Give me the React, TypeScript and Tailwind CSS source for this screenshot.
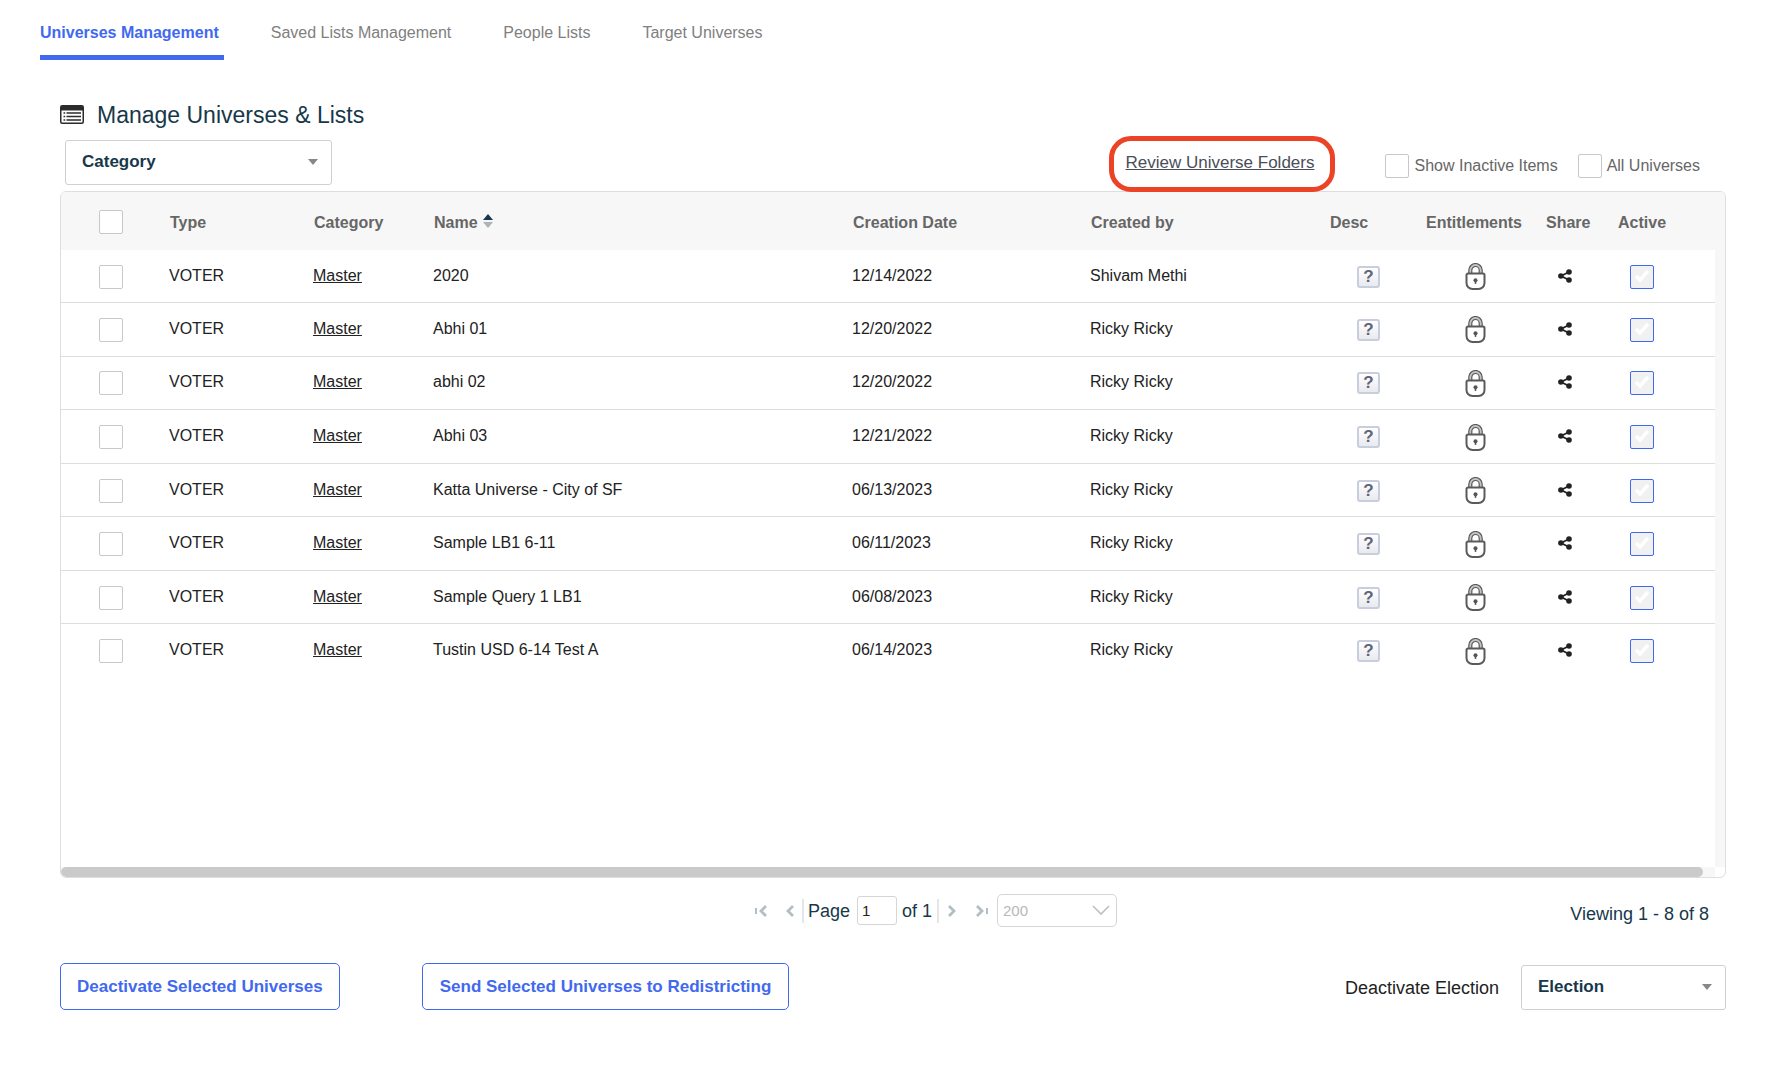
import { useState } from "react";

const tabs = ["Universes Management", "Saved Lists Management", "People Lists", "Target Universes"];

const universes = [
    { name: "2020", date: "12/14/2022", createdBy: "Shivam Methi" },
    { name: "Abhi 01", date: "12/20/2022", createdBy: "Ricky Ricky" },
    { name: "abhi 02", date: "12/20/2022", createdBy: "Ricky Ricky" },
    { name: "Abhi 03", date: "12/21/2022", createdBy: "Ricky Ricky" },
    { name: "Katta Universe - City of SF", date: "06/13/2023", createdBy: "Ricky Ricky" },
    { name: "Sample LB1 6-11", date: "06/11/2023", createdBy: "Ricky Ricky" },
    { name: "Sample Query 1 LB1", date: "06/08/2023", createdBy: "Ricky Ricky" },
    { name: "Tustin USD 6-14 Test A", date: "06/14/2023", createdBy: "Ricky Ricky" },
];

function ListIcon() {
    return (
        <svg width="24" height="19" viewBox="0 0 24 19" className="mb-[2px]" aria-hidden="true">
            <rect x="0.75" y="0.75" width="22.5" height="17.5" rx="1.5" fill="#fff" stroke="#2b2b2b" strokeWidth="1.5" />
            <path d="M1 1h22v4.5H1z" fill="#2b2b2b" />
            <path d="M3.5 8h1.7M3.5 11.5h1.7M3.5 15h1.7M6.5 8H21M6.5 11.5H21M6.5 15H21" stroke="#2b2b2b" strokeWidth="1.5" />
        </svg>
    );
}

function LockIcon() {
    return (
        <svg width="21" height="27" viewBox="0 0 21 27" className="block" aria-hidden="true">
            <path d="M5.3 11.5V7.2a5.2 5.2 0 0 1 10.4 0v4.3" fill="#fff" stroke="#5a5a5a" strokeWidth="4.2" />
            <path d="M5.3 11.5V7.2a5.2 5.2 0 0 1 10.4 0v4.3" fill="none" stroke="#c4c4c4" strokeWidth="1.8" />
            <path
                d="M3 10.5h15a1.5 1.5 0 0 1 1.5 1.5v8a6 6 0 0 1-6 6h-6a6 6 0 0 1-6-6v-8A1.5 1.5 0 0 1 3 10.5z"
                fill="#fff"
                stroke="#5a5a5a"
                strokeWidth="2"
            />
            <circle cx="10.5" cy="17.2" r="2" fill="#555" />
            <path d="M9.7 17.5h1.6v3.4H9.7z" fill="#555" />
        </svg>
    );
}

function ShareIcon() {
    return (
        <svg width="14" height="14" viewBox="0 0 14 14" className="block" aria-hidden="true">
            <path d="M11 3L3 7l8 4" fill="none" stroke="#222" strokeWidth="1.8" />
            <circle cx="11" cy="3" r="2.8" fill="#222" />
            <circle cx="2.9" cy="7" r="2.8" fill="#222" />
            <circle cx="11" cy="11" r="2.8" fill="#222" />
        </svg>
    );
}

function Tick() {
    return (
        <svg width="16" height="14" viewBox="0 0 16 14" className="pointer-events-none absolute top-1 left-1" aria-hidden="true">
            <path d="M2 7l4 4 8-9" fill="none" stroke="#fff" strokeWidth="3.4" />
        </svg>
    );
}

function Checkbox({ id, label }: { id?: string; label?: string }) {
    return (
        <input
            id={id}
            type="checkbox"
            aria-label={label}
            className="block size-6 shrink-0 appearance-none rounded-[2px] border border-[#c8c8c8] bg-white"
        />
    );
}

function Dropdown({ id, label, option, className }: { id: string; label?: string; option: string; className: string }) {
    return (
        <div className={"relative " + className}>
            <select
                id={id}
                aria-label={label}
                className="block h-[45px] w-full appearance-none rounded-[3px] border border-[#cdd1d5] bg-white px-4 pb-px text-[17px] font-bold text-[#17384a]"
            >
                <option>{option}</option>
            </select>
            <svg width="10" height="6" viewBox="0 0 10 6" className="pointer-events-none absolute top-[19px] right-[14px]" aria-hidden="true">
                <path d="M0 0h10L5 6z" fill="#888" />
            </svg>
        </div>
    );
}

function PagerButton({ label, path, bar }: { label: string; path: string; bar?: string }) {
    return (
        <button type="button" aria-label={label} className="flex h-6 w-[14px] items-center justify-center">
            <svg width="14" height="12" viewBox="0 0 14 12" aria-hidden="true">
                <path d={path} fill="none" stroke="#b3bec4" strokeWidth="2.8" />
                {bar && <path d={bar} stroke="#b3bec4" strokeWidth="2" />}
            </svg>
        </button>
    );
}

export default function App() {
    const [activeTab, setActiveTab] = useState(tabs[0]);

    return (
        <div className="bg-white pb-16 font-['Liberation_Sans',Arial,sans-serif] text-base text-[#222]">
            <nav className="flex gap-[47px] px-10 pt-[21px]">
                {tabs.map((tab) => (
                    <button
                        key={tab}
                        type="button"
                        onClick={() => setActiveTab(tab)}
                        className={
                            tab === activeTab
                                ? "border-b-[5px] border-[#4169f0] pr-[5px] pb-[10px] font-bold text-[#4169f0]"
                                : "border-b-[5px] border-transparent pr-[5px] pb-[10px] text-[#808080]"
                        }
                    >
                        {tab}
                    </button>
                ))}
            </nav>

            <main className="pt-[41px] pr-[50px] pl-[60px]">
                <h1 className="flex items-center gap-[13px] text-[23px] leading-7 text-[#17384a]">
                    <ListIcon />
                    Manage Universes &amp; Lists
                </h1>

                <div className="flex items-start justify-between pt-[7px] pr-[26px] pl-[5px]">
                    <Dropdown id="category" label="Category" option="Category" className="mt-1 w-[267px]" />
                    <div className="flex items-start">
                        <div className="relative z-10 flex h-14 items-center rounded-[22px] border-[5px] border-[#ec4327] pr-4 pb-[2px] pl-3">
                            <a href="#folders" className="text-[17px] leading-6 text-[#4a4e5a] underline">
                                Review Universe Folders
                            </a>
                        </div>
                        <div className="flex gap-5 pt-[18px] pl-[50px] text-[#666]">
                            <div className="flex items-center gap-[5px]">
                                <Checkbox id="inactive" />
                                <label htmlFor="inactive">Show Inactive Items</label>
                            </div>
                            <div className="flex items-center gap-[5px]">
                                <Checkbox id="all" />
                                <label htmlFor="all">All Universes</label>
                            </div>
                        </div>
                    </div>
                </div>

                <div className="-mt-px overflow-hidden rounded-md border border-[#dedede]">
                    <div className="min-h-[675px] bg-linear-to-l from-[#f7f7f7] from-[10px] to-white to-[10px]">
                        <table className="h-[486px] w-full table-fixed text-left">
                            <colgroup>
                                <col className="w-[108px]" />
                                <col className="w-36" />
                                <col className="w-[120px]" />
                                <col />
                                <col className="w-[238px]" />
                                <col className="w-[239px]" />
                                <col className="w-24" />
                                <col className="w-[120px]" />
                                <col className="w-[72px]" />
                                <col className="w-[98px]" />
                                <col className="w-[10px]" />
                            </colgroup>
                            <thead className="bg-[#f7f7f7] text-[#666]">
                                <tr className="h-[58px] *:pt-1 *:pl-px">
                                    <th className="pt-[2px]! pl-[38px]!">
                                        <Checkbox label="Select all" />
                                    </th>
                                    <th>Type</th>
                                    <th>Category</th>
                                    <th>
                                        <button type="button" className="flex items-center gap-[5px] font-bold">
                                            Name
                                            <svg width="10" height="14" viewBox="0 0 10 14" className="mb-1" aria-hidden="true">
                                                <path d="M0 6l5-6 5 6z" fill="#17384a" />
                                                <path d="M0 8h10l-5 6z" fill="#a9b4ba" />
                                            </svg>
                                        </button>
                                    </th>
                                    <th>Creation Date</th>
                                    <th>Created by</th>
                                    <th>Desc</th>
                                    <th>Entitlements</th>
                                    <th>Share</th>
                                    <th>Active</th>
                                    <th></th>
                                </tr>
                            </thead>
                            <tbody>
                                {universes.map((universe) => (
                                    <tr key={universe.name} className="*:border-b *:border-[#dedede] *:pb-px last:*:border-transparent">
                                        <td className="pt-[2px] pl-[38px]">
                                            <Checkbox label={"Select " + universe.name} />
                                        </td>
                                        <td>VOTER</td>
                                        <td>
                                            <a href="#master" className="underline">Master</a>
                                        </td>
                                        <td>{universe.name}</td>
                                        <td>{universe.date}</td>
                                        <td>{universe.createdBy}</td>
                                        <td className="pt-[2px] pl-7">
                                            <button
                                                type="button"
                                                aria-label="Description"
                                                className="block h-[22px] w-[23px] rounded-[3px] border-2 border-[#c9cede] bg-linear-to-b from-white to-[#e9eaee] text-[17px] leading-[18px] font-bold text-[#62647a]"
                                            >
                                                ?
                                            </button>
                                        </td>
                                        <td className="pt-[2px] pl-10">
                                            <button type="button" aria-label="Entitlements" className="block">
                                                <LockIcon />
                                            </button>
                                        </td>
                                        <td className="pl-[13px]">
                                            <button type="button" aria-label="Share" className="block">
                                                <ShareIcon />
                                            </button>
                                        </td>
                                        <td className="pt-[2px] pl-[13px]">
                                            <span className="relative block size-6">
                                                <input
                                                    type="checkbox"
                                                    checked
                                                    disabled
                                                    aria-label={universe.name + " active"}
                                                    className="block size-6 appearance-none rounded-[2px] border border-[#4169f0] bg-[#f1f1f1]"
                                                />
                                                <Tick />
                                            </span>
                                        </td>
                                        <td className="border-[#f7f7f7]!"></td>
                                    </tr>
                                ))}
                            </tbody>
                        </table>
                    </div>
                    <div className="mr-[10px] bg-[#f7f7f7] pr-3">
                        <div className="h-[10px] rounded-full bg-[#cacaca]"></div>
                    </div>
                </div>

                <div className="grid grid-cols-[1fr_auto_1fr] pt-4 text-lg leading-7 text-[#17384a]">
                    <div></div>
                    <div className="flex h-[33px] items-center pl-[85px]">
                        <PagerButton label="First page" path="M12 1L7 6l5 5" bar="M2 3v6" />
                        <span className="w-[14px]"></span>
                        <PagerButton label="Previous page" path="M11 1L6 6l5 5" />
                        <label htmlFor="page" className="ml-[6px] border-l-2 border-[#e6e6e6] pr-[7px] pl-1 leading-6">Page</label>
                        <input
                            id="page"
                            defaultValue="1"
                            className="h-[29px] w-10 rounded-[3px] border border-[#d5d5d5] px-1 text-[15px] text-[#222]"
                        />
                        <span className="ml-[5px] border-r-2 border-[#e6e6e6] pr-[5px] leading-6">of 1</span>
                        <span className="w-[6px]"></span>
                        <PagerButton label="Next page" path="M4 1l5 5-5 5" />
                        <span className="w-4"></span>
                        <PagerButton label="Last page" path="M2 1l5 5-5 5" bar="M12 3v6" />
                        <div className="relative ml-2">
                            <select
                                aria-label="Rows per page"
                                className="block h-[33px] w-[120px] appearance-none rounded-[5px] border border-[#d5d5d5] bg-white px-[5px] text-[15px] text-[#b8b8b8]"
                            >
                                <option>200</option>
                            </select>
                            <svg width="18" height="11" viewBox="0 0 18 11" className="pointer-events-none absolute top-[11px] right-[7px]" aria-hidden="true">
                                <path d="M1 1l8 8 8-8" fill="none" stroke="#c0c0c0" strokeWidth="1.6" />
                            </svg>
                        </div>
                    </div>
                    <div className="pt-[6px] pr-[17px] text-right">Viewing 1 - 8 of 8</div>
                </div>

                <div className="flex items-end justify-between pt-[35px]">
                    <div className="flex gap-[82px] text-[17px] font-bold text-[#4169f0]">
                        <button type="button" className="h-[47px] rounded-[5px] border border-[#4169f0] px-4">
                            Deactivate Selected Universes
                        </button>
                        <button type="button" className="h-[47px] rounded-[5px] border border-[#4169f0] px-[17px]">
                            Send Selected Universes to Redistricting
                        </button>
                    </div>
                    <div className="flex items-center gap-[22px]">
                        <label htmlFor="election" className="text-lg">Deactivate Election</label>
                        <Dropdown id="election" option="Election" className="w-[205px]" />
                    </div>
                </div>
            </main>
        </div>
    );
}
